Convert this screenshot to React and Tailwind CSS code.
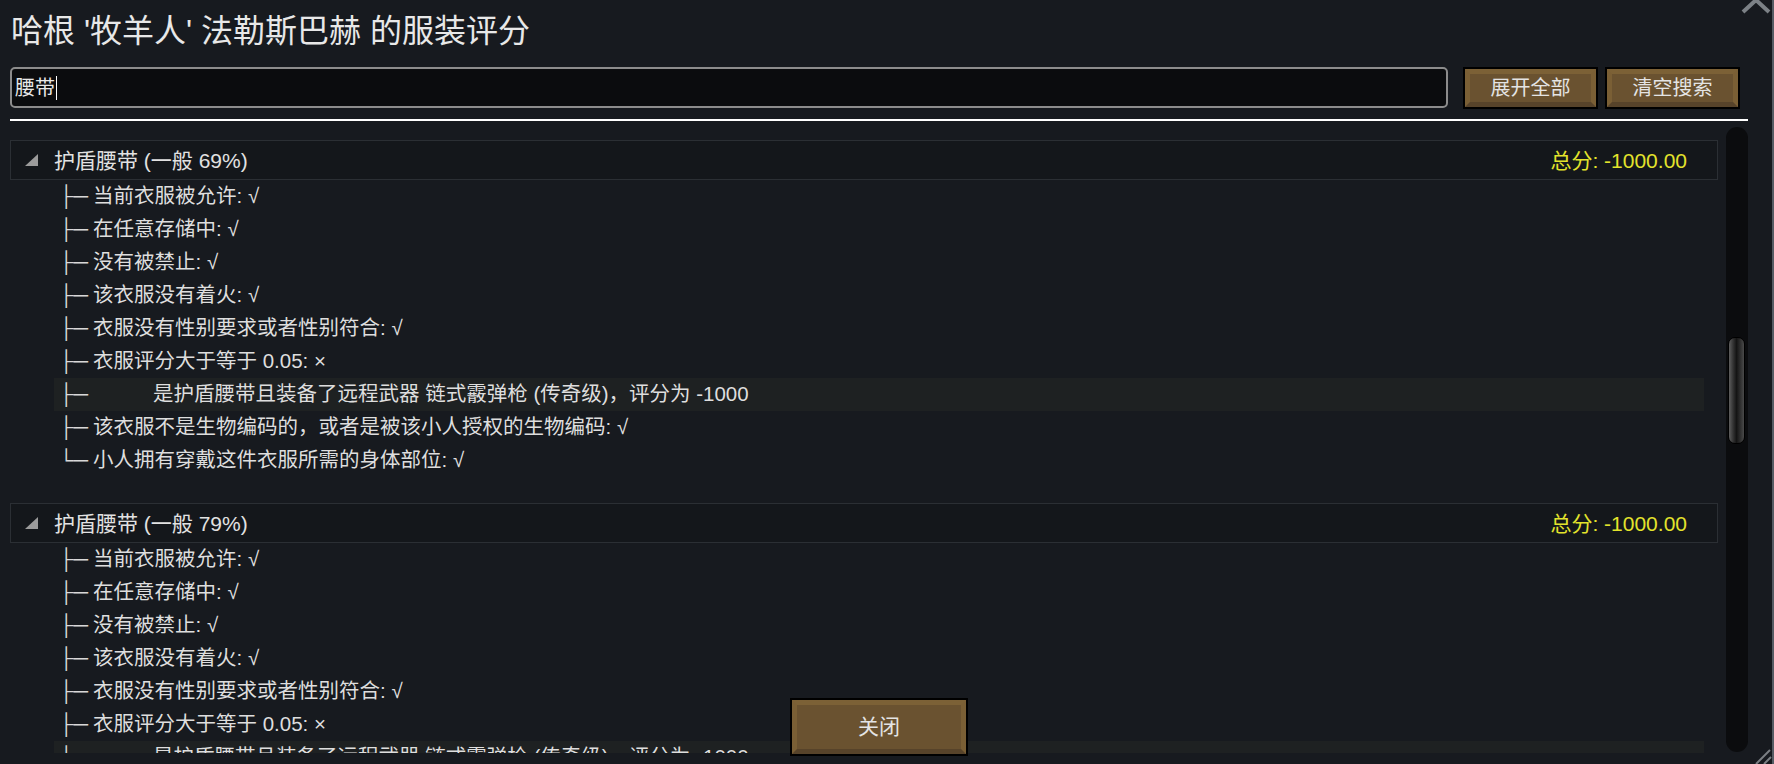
const items = [
  { t: '当前衣服被允许: √' },
  { t: '在任意存储中: √' },
  { t: '没有被禁止: √' },
  { t: '该衣服没有着火: √' },
  { t: '衣服没有性别要求或者性别符合: √' },
  { t: '衣服评分大于等于 0.05: ×' },
  { t: '是护盾腰带且装备了远程武器 链式霰弹枪 (传奇级)，评分为 -1000', hl: true },
  { t: '该衣服不是生物编码的，或者是被该小人授权的生物编码: √' },
  { t: '小人拥有穿戴这件衣服所需的身体部位: √', last: true },
];

const blocks = ['护盾腰带 (一般 69%)', '护盾腰带 (一般 79%)'];

function BrownButton({ children, className }) {
  return (
    <div className={'border-2 border-black bg-[#6a5230] ' + className}>
      <div className="w-full h-full flex items-center justify-center border-t-[5px] border-l-[5px] border-r-[5px] border-b-[5px] border-t-[#7c6136] border-l-[#7a5f35] border-r-[#7a5f35] border-b-[#57432a] text-[#e4e4e4]">
        {children}
      </div>
    </div>
  );
}

function Block({ title }) {
  return (
    <div className="mb-[26px]">
      <div className="h-[40px] border border-[#2b2f34] bg-[#14171b] flex items-center">
        <svg width="13" height="12" viewBox="0 0 13 12" className="ml-[14px]">
          <polygon points="13,0 13,12 0,12" fill="#9b9b9b" />
        </svg>
        <span className="ml-[16px] text-[21px] text-[#e2e2e2] leading-none">{title}</span>
        <span className="ml-auto mr-[30px] text-[21px] text-[#e3e32c] leading-none">总分: -1000.00</span>
      </div>
      <div className="ml-[44px] mr-[14px]">
        {items.map((it, i) => (
          <div
            key={i}
            className={
              'h-[33px] flex items-center px-[5px] text-[20.5px] text-[#dedede] whitespace-nowrap leading-none ' +
              (it.hl ? 'bg-[#1e2122]' : '')
            }
          >
            <span className="w-[34px] shrink-0 text-[#d8d8d8]">{it.last ? '└─' : '├─'}</span>
            <span className={it.hl ? 'ml-[60px]' : ''}>{it.t}</span>
          </div>
        ))}
      </div>
    </div>
  );
}

export default function App() {
  return (
    <div className="relative w-[1774px] h-[764px] overflow-hidden bg-[#171a1f] border-r-2 border-[#565c64] font-['Liberation_Sans','DejaVu_Sans','Noto_Sans_CJK_SC',sans-serif]">
      <div className="pl-[10px] pr-[24px] flex flex-col">
        <div className="h-[62px] flex items-center pl-[1px] text-[32px] text-[#e8e8e8] leading-none whitespace-nowrap">
          哈根 '牧羊人' 法勒斯巴赫 的服装评分
        </div>
        <div className="mt-[5px] mr-[8px] flex items-start">
          <div className="flex-1 h-[41px] rounded-[5px] border-2 border-[#8c8c8c] bg-[#0b0c0e] flex items-center pl-[3px]">
            <span className="text-[20px] text-[#e8e8e8] leading-none">腰带</span>
            <span className="w-px h-[24px] bg-white ml-[1px]" />
          </div>
          <BrownButton className="ml-[15px] w-[135px] h-[42px] text-[20px]">展开全部</BrownButton>
          <BrownButton className="ml-[7px] w-[135px] h-[42px] text-[20px]">清空搜索</BrownButton>
        </div>
        <div className="mt-[10px] h-[2px] bg-white" />
        <div className="mt-[6px] h-[626px] flex overflow-hidden">
          <div className="flex-1 pt-[13px] flex flex-col overflow-hidden">
            {blocks.map((b) => (
              <Block key={b} title={b} />
            ))}
          </div>
          <div className="ml-[8px] w-[22px] h-[625px] rounded-full bg-[#0b0c0e] relative">
            <div className="absolute left-[2px] right-[3px] top-[210px] h-[107px] rounded-[7px] border border-black bg-gradient-to-r from-[#5e5e5e] via-[#141414] to-[#4a4a4a]" />
          </div>
        </div>
      </div>

      <BrownButton className="absolute left-[790px] top-[698px] w-[178px] h-[58px] text-[21px]">关闭</BrownButton>

      <svg className="absolute left-[1740px] top-[-3px]" width="32" height="18" viewBox="0 0 32 18">
        <polyline points="3,15 16,3 29,15" fill="none" stroke="#7c8186" strokeWidth="4" />
      </svg>

      <svg className="absolute left-[1752px] top-[748px]" width="20" height="16" viewBox="0 0 20 16">
        <line x1="4" y1="16" x2="18" y2="2" stroke="#7b7f84" strokeWidth="2" />
        <line x1="12" y1="16" x2="19" y2="9" stroke="#7b7f84" strokeWidth="2" />
      </svg>
    </div>
  );
}
